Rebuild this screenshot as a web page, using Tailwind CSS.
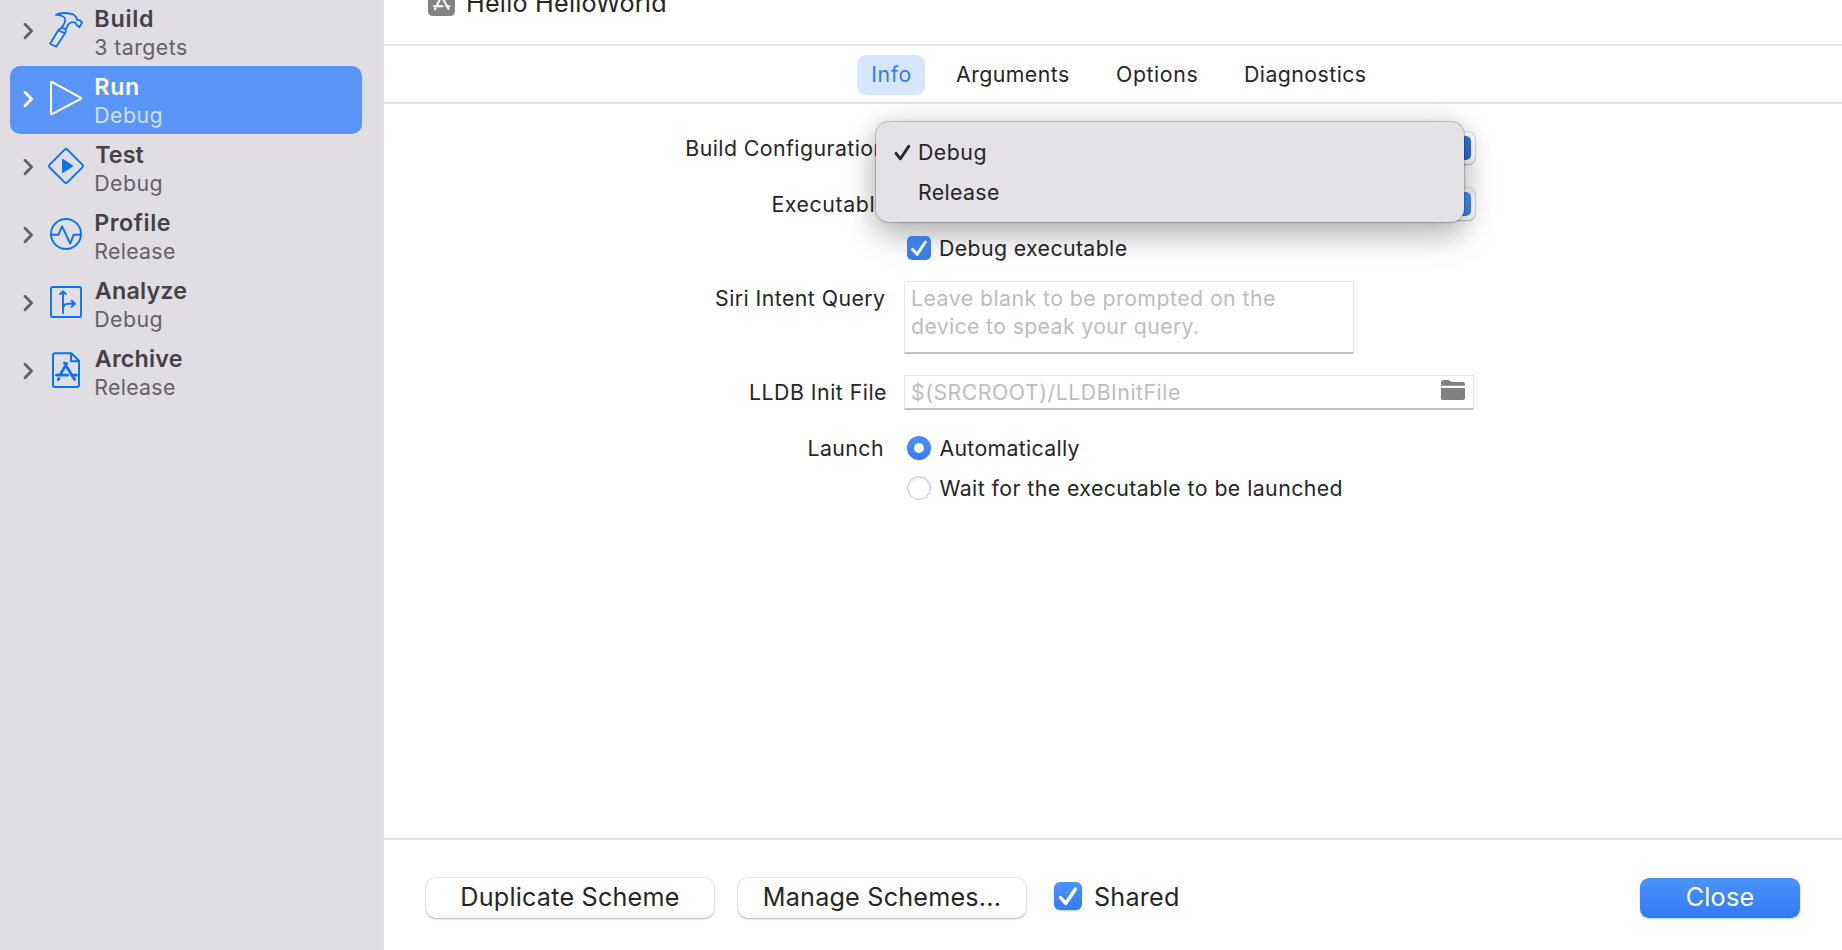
<!DOCTYPE html>
<html lang="en">
<head>
<meta charset="utf-8">
<title>Scheme editor</title>
<script src="https://cdn.jsdelivr.net/npm/@tailwindcss/browser@4"></script>
</head>
<body class="h-[950px] w-[1842px] overflow-hidden bg-white font-[Inter,sans-serif] text-[21.3px] leading-7 tracking-[0.44px] whitespace-nowrap text-[#262626]">
<svg class="hidden">
  <symbol id="chev" viewBox="0 0 12 18"><path d="M2 2.2 8.6 9 2 15.8" fill="none" stroke="currentColor" stroke-width="2.8" stroke-linecap="round" stroke-linejoin="round"/></symbol>
  <symbol id="check" viewBox="0 0 24 24"><path d="M5.6 13.4 10.1 18.3 18.4 6" fill="none" stroke="#fff" stroke-width="3" stroke-linecap="round" stroke-linejoin="round"/></symbol>
</svg>
<div class="flex h-full">
  <aside class="h-full w-[384px] shrink-0 border-r-2 border-[#e3e1e4] bg-[#e0dee3] pr-5 pl-[10px] text-[#636166]">
    <div class="-mt-[2px] flex h-[68px] rounded-[10px]">
      <svg class="mt-[24px] ml-[13px] h-[18px] w-3"><use href="#chev"/></svg>
      <svg class="mt-[12px] ml-[11px] size-10" viewBox="0 0 40 40" fill="none" stroke="#0a72f5" stroke-width="1.8" stroke-linejoin="round"><path d="M10 4.8C14 2.4 20 2.6 26.5 4.2C28 4.6 29.2 6.4 30.3 7.2L30.9 9.8L33.8 10.2L36 12.4L33.4 17.2L30.5 14.8L29.6 12.8C27 11.8 24 12.2 22.3 14.5L20 18.8L19.4 22.8L10.2 36.8L4.1 33.7L12.2 20.2L15.6 17.6C18.6 13.6 20.4 10.6 18.6 7.6C16.6 5.2 13.4 5 10 4.8Z"/><path d="M12.2 20.2 19 23.4M15.4 17.6 20 19.4"/></svg>
      <div class="ml-[8.3px] pt-[6px]"><div class="text-[23.3px] leading-[29px] font-semibold tracking-[0.75px] text-[#434246]">Build</div><div>3 targets</div></div>
    </div>
    <div class="flex h-[68px] rounded-[10px] bg-[#5b95f7] text-white">
      <svg class="mt-[24px] ml-[13px] h-[18px] w-3"><use href="#chev"/></svg>
      <svg class="mt-[12px] ml-[11px] size-10" viewBox="0 0 40 40" fill="none" stroke="#fff" stroke-width="2" stroke-linejoin="round"><path d="M5 4.2V35.6Q5 36.6 6 36.1L34.5 21Q35.6 20.3 34.5 19.6L6 4Q5 3.4 5 4.2Z"/></svg>
      <div class="ml-[8.3px] pt-[6px]"><div class="text-[23.3px] leading-[29px] font-semibold tracking-[0.65px]">Run</div><div class="text-[#cfdffc]">Debug</div></div>
    </div>
    <div class="flex h-[68px]">
      <svg class="mt-[24px] ml-[13px] h-[18px] w-3"><use href="#chev"/></svg>
      <svg class="mt-[12px] ml-[11px] size-10" viewBox="0 0 40 40"><path d="M18.9 3.4Q20 2.4 21.1 3.4L36.6 18.9Q37.6 20 36.6 21.1L21.1 36.6Q20 37.6 18.9 36.6L3.4 21.1Q2.4 20 3.4 18.9Z" fill="none" stroke="#0a72f5" stroke-width="2"/><path d="M16 13.4V26.6Q16 27.6 17 27L26.6 20.8Q27.4 20 26.6 19.3L17 13Q16 12.4 16 13.4Z" fill="#0a72f5"/></svg>
      <div class="ml-[8.3px] pt-[6px]"><div class="text-[23.3px] leading-[29px] font-semibold tracking-normal text-[#434246]"><span class="ml-[1px]">Test</span></div><div>Debug</div></div>
    </div>
    <div class="flex h-[68px]">
      <svg class="mt-[24px] ml-[13px] h-[18px] w-3"><use href="#chev"/></svg>
      <svg class="mt-[12px] ml-[11px] size-10" viewBox="0 0 40 40" fill="none" stroke="#0a72f5" stroke-width="1.9" stroke-linejoin="round" stroke-linecap="round"><circle cx="20" cy="20" r="15"/><path d="M5 20.8H12.4L16 12.2L24.2 29.6L27.6 20.8H35"/></svg>
      <div class="ml-[8.3px] pt-[6px]"><div class="text-[23.3px] leading-[29px] font-semibold tracking-[0.53px] text-[#434246]">Profile</div><div class="tracking-[0.3px]">Release</div></div>
    </div>
    <div class="flex h-[68px]">
      <svg class="mt-[24px] ml-[13px] h-[18px] w-3"><use href="#chev"/></svg>
      <svg class="mt-[12px] ml-[11px] size-10" viewBox="0 0 40 40" fill="none" stroke="#0a72f5" stroke-width="1.9" stroke-linejoin="round" stroke-linecap="round"><rect x="5" y="5" width="30" height="30" rx="1.6"/><path d="M17 31V9.6M14 12.2L17 9.2L20 12.2M17 27C17 23.6 19 21.8 22.4 21.8H29M25.6 18.8L28.8 21.8L25.6 24.9"/></svg>
      <div class="ml-[8.3px] pt-[6px]"><div class="text-[23.3px] leading-[29px] font-semibold tracking-[0.19px] text-[#434246]"><span class="ml-[0.5px]">Analyze</span></div><div>Debug</div></div>
    </div>
    <div class="flex h-[68px]">
      <svg class="mt-[24px] ml-[13px] h-[18px] w-3"><use href="#chev"/></svg>
      <svg class="mt-[12px] ml-[11px] size-10" viewBox="0 0 40 40" fill="none" stroke="#0a72f5" stroke-width="2" stroke-linejoin="round" stroke-linecap="round"><path d="M9 3.2H25.4L33 10.8V34.8Q33 37 30.8 37H9.2Q7 37 7 34.8V5.4Q7 3.2 9 3.2ZM25 3.8V11.2H32.6"/><path d="M20.8 13.4L14 25M18.4 13L28.6 29.6M10.4 25.2H21.6M26.6 25.2H30.4M12.2 29.6L13 28.4" stroke-width="2.8"/></svg>
      <div class="ml-[8.3px] pt-[6px]"><div class="text-[23.3px] leading-[29px] font-semibold tracking-[0.19px] text-[#434246]"><span class="ml-[0.5px]">Archive</span></div><div class="tracking-[0.3px]">Release</div></div>
    </div>
  </aside>

  <main class="flex h-full flex-1 flex-col">
    <header class="flex h-[46px] shrink-0 border-b-2 border-[#e4e4e4] pl-11">
      <svg class="-mt-[11px] size-[27px] shrink-0" viewBox="0 0 27 27"><rect width="27" height="27" rx="4.5" fill="#828282"/><path d="M14.6 5L8.6 17M12.4 5L20.6 20M6 17.2H14.6M18.4 17.2H21.4M6.8 20.4L7.4 19.4" stroke="#fff" stroke-width="2" stroke-linecap="round"/></svg>
      <h1 class="-mt-[12px] ml-[11px] text-[25.2px] leading-[30px] tracking-[0.22px]">Hello HelloWorld</h1>
    </header>
    <nav class="flex h-[58px] shrink-0 border-b-2 border-[#e4e4e4] pt-[9px] pl-[473px] leading-[38px]">
      <div class="h-10 w-[68px] rounded-[9px] bg-[#d6e6fd] pl-[14.2px] tracking-[0.6px] text-[#3478f6]">Info</div>
      <div class="ml-[31px] w-[160px]">Arguments</div>
      <div class="w-[128px] tracking-[0.6px]">Options</div>
      <div>Diagnostics</div>
    </nav>

    <section class="relative flex-1 pt-4">
      <div class="flex h-14 items-center">
        <div class="w-[502.6px] shrink-0 text-right">Build Configuration</div>
        <div class="ml-[20.4px] flex h-8 w-[568px] justify-end rounded-[7px] bg-white p-1 shadow-[0_0_1px_1px_rgba(0,0,0,.12),0_1px_2px_rgba(0,0,0,.2)]"><div class="h-6 w-6 rounded-[5px] bg-linear-to-b from-[#3478e8] to-[#2a66de]"></div></div>
      </div>
      <div class="flex h-14 items-center">
        <div class="w-[504.2px] shrink-0 text-right tracking-[0.6px]">Executable</div>
        <div class="ml-[18.8px] flex h-8 w-[568px] justify-end rounded-[7px] bg-white p-1 shadow-[0_0_1px_1px_rgba(0,0,0,.12),0_1px_2px_rgba(0,0,0,.2)]"><div class="h-6 w-6 rounded-[5px] bg-linear-to-b from-[#4a93fb] to-[#3a80fb]"></div></div>
      </div>
      <div class="flex h-8 items-center pl-[523px]">
        <div class="size-6 rounded-[5px] bg-linear-to-b from-[#4a93f9] to-[#367cf7]"><svg class="size-6"><use href="#check"/></svg></div>
        <div class="ml-2 tracking-[0.38px]">Debug executable</div>
      </div>
      <div class="mt-[17px] flex">
        <div class="mt-[3px] w-[501.5px] shrink-0 text-right">Siri Intent Query</div>
        <div class="ml-[18.5px] h-[73px] w-[450px] border border-b-2 border-[#e6e6e6] border-b-[#c4c4c4] bg-white pt-[2px] pl-[6px] text-[#bdbdbd]">Leave blank to be prompted on the<br><span class="tracking-[0.34px]">device to speak your query.</span></div>
      </div>
      <div class="mt-[21px] flex">
        <div class="mt-[3px] w-[503px] shrink-0 text-right tracking-[0.49px]">LLDB Init File</div>
        <div class="ml-[17px] flex h-[35px] w-[570px] border border-b-2 border-[#e6e6e6] border-b-[#c4c4c4] bg-white pt-[2px] pl-[6px] text-[#bdbdbd]"><span class="tracking-[0.5px]">$(SRCROOT)/LLDBInitFile</span>
          <svg class="mt-[2px] mr-2 ml-auto h-5 w-6" viewBox="0 0 24 20" fill="#808080"><path d="M0 5.8V2.6Q0 0 2.6 0H6.8Q8 0 9 .8L10 1.6Q10.5 2 11.2 2H21.4Q24 2 24 4.6V5.8Z"/><path d="M0 8H24V17.4Q24 20 21.4 20H2.6Q0 20 0 17.4Z"/></svg>
        </div>
      </div>
      <div class="mt-[22px] flex h-8 items-center">
        <div class="w-[500px] shrink-0 text-right">Launch</div>
        <div class="ml-[23px] flex size-6 items-center justify-center rounded-full bg-linear-to-b from-[#4a93f9] to-[#367cf7]"><div class="size-[10px] rounded-full bg-white"></div></div>
        <div class="ml-[8.4px] tracking-[0.32px]">Automatically</div>
      </div>
      <div class="mt-2 flex h-8 items-center pl-[523px]">
        <div class="size-6 rounded-full border border-[#c6c6c6] bg-white shadow-[inset_0_1px_3px_rgba(0,0,0,.14)]"></div>
        <div class="ml-[8.4px] tracking-[0.43px]">Wait for the executable to be launched</div>
      </div>

      <div class="absolute top-[18px] left-[492px] h-[100px] w-[588px] rounded-[13px] bg-[#e4e2e6] pt-[10px] leading-10 shadow-[0_0_1px_1px_rgba(0,0,0,.22),0_0_28px_rgba(0,0,0,.12),0_14px_32px_rgba(0,0,0,.26)]">
        <div class="flex h-10"><svg class="mt-[11px] ml-[16.5px] h-[19px] w-[20px]" viewBox="0 0 20 19"><path d="M3 10.4L7.4 15.8L15.8 3.2" fill="none" stroke="#262626" stroke-width="2.9" stroke-linecap="round" stroke-linejoin="round"/></svg><span class="ml-[5.5px] tracking-[0.5px]">Debug</span></div>
        <div class="h-10 pl-[42px] tracking-[0.36px]">Release</div>
      </div>
    </section>

    <footer class="flex h-[112px] shrink-0 border-t-2 border-[#e4e4e4] pt-[38px] pl-[42px] text-[25.2px] leading-[38px] tracking-[0.2px]">
      <div class="h-10 w-72 rounded-[10px] bg-white text-center shadow-[0_0_1px_1px_rgba(0,0,0,.08),0_1px_2px_rgba(0,0,0,.26)]">Duplicate Scheme</div>
      <div class="ml-6 h-10 w-72 rounded-[10px] bg-white text-center shadow-[0_0_1px_1px_rgba(0,0,0,.08),0_1px_2px_rgba(0,0,0,.26)]">Manage Schemes...</div>
      <div class="mt-1 ml-7 size-7 rounded-[6px] bg-linear-to-b from-[#4a93f9] to-[#367cf7] shadow-[0_1px_2px_rgba(54,124,247,.35)]"><svg class="size-7"><use href="#check"/></svg></div>
      <div class="ml-3">Shared</div>
      <div class="mr-[42px] ml-auto h-10 w-40 rounded-[9px] bg-linear-to-b from-[#4c93f9] to-[#3379f7] text-center text-white shadow-[0_1px_2px_rgba(54,124,247,.4)]">Close</div>
    </footer>
  </main>
</div>
</body>
</html>
